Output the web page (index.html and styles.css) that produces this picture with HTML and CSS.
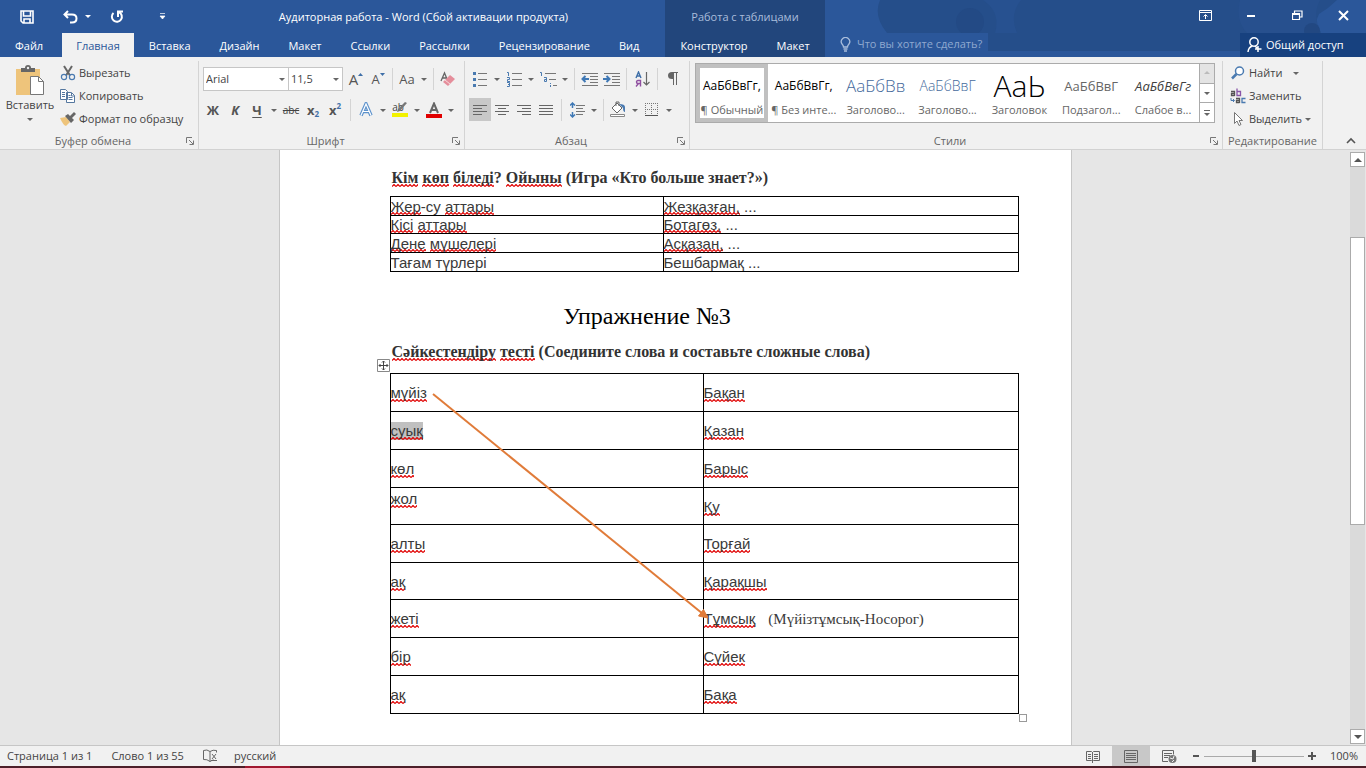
FILE: index.html
```html
<!DOCTYPE html>
<html lang="ru">
<head>
<meta charset="utf-8">
<title>Аудиторная работа - Word</title>
<link rel="stylesheet" href="styles.css">
</head>
<body>
<svg class="defs" aria-hidden="true">
  <symbol id="caret" viewBox="0 0 12 12"><path d="M3 5h6L6 8z" fill="#666"/></symbol>
  <symbol id="launch" viewBox="0 0 9 9"><path d="M.5 6V.5H6M3 3l4 4M7.500 3.500v4h-4" fill="none" stroke="#777"/></symbol>
</svg>

<header class="header">
  <svg class="clouds" viewBox="0 0 541 57" preserveAspectRatio="none" aria-hidden="true">
    <path d="M55 0H512q-8 8-18 14q-6 12 2 18q-8 6 0 19H163V33H62Q48 16 55 0z" fill="#254e8a"/>
    <path d="M158 0q18 12 12 33h22q-8-18 4-33z" fill="#275190"/>
    <circle cx="145" cy="22" r="14" fill="#234a85"/>
    <path d="M415 0h80q-8 15 1 33h-74q-12-12-7-33z" fill="#27508e"/>
    <circle cx="487" cy="31" r="8" fill="#224882"/>
  </svg>
  <div class="head-main">
    <div class="titlebar">
      <div class="quick">
        <button aria-label="Сохранить"><svg width="14" height="14" viewBox="0 0 14 14"><path d="M1 1h12v12H3l-2-2zM3.500 1v5h7V1M4 13V9h6v4" fill="none" stroke="#fff" stroke-width="1.600"/></svg></button>
        <button aria-label="Отменить" class="undo"><svg width="15" height="14" viewBox="0 0 15 14"><path d="M5 1L1.500 4.500L5 8M2 4.500h7q4.500 0 4.500 4T9 12.500H7" fill="none" stroke="#fff" stroke-width="2"/></svg></button>
        <button aria-label="Список отмен" class="slim"><svg width="6" height="4" viewBox="0 0 6 4"><path d="M0 0h6L3 3z" fill="#fff"/></svg></button>
        <button aria-label="Повторить" class="redo"><svg width="14" height="14" viewBox="0 0 14 14"><path d="M3.500 3A5 5 0 1 0 9 2.200M8 7V1.500h5" fill="none" stroke="#fff" stroke-width="2"/></svg></button>
        <button aria-label="Настройка панели" class="custom"><svg width="7" height="7" viewBox="0 0 7 7"><path d="M1 .5h5M1 3h5L3.500 6z" fill="#fff" stroke="#fff" stroke-width=".7"/></svg></button>
      </div>
      <div class="doc-title">Аудиторная работа - Word (Сбой активации продукта)</div>
    </div>
    <nav class="tabs">
      <button class="file">Файл</button><button class="active">Главная</button><button>Вставка</button><button>Дизайн</button><button>Макет</button><button>Ссылки</button><button>Рассылки</button><button>Рецензирование</button><button>Вид</button>
    </nav>
  </div>
  <div class="context">
    <div class="context-title">Работа с таблицами</div>
    <nav class="tabs"><button>Конструктор</button><button>Макет</button></nav>
  </div>
  <div class="head-right">
    <div class="window-buttons">
      <button aria-label="Параметры ленты"><svg width="13" height="11" viewBox="0 0 13 11"><path d="M.5.500h12v10H.5zM.5 2.500h12M6.500 9V5M4.500 6.500l2-2l2 2" fill="none" stroke="#fff"/></svg></button>
      <button aria-label="Свернуть"><svg width="10" height="10" viewBox="0 0 10 10"><path d="M1 6h8" stroke="#fff" stroke-width="2"/></svg></button>
      <button aria-label="Восстановить"><svg width="11" height="11" viewBox="0 0 11 11"><path d="M.5 3.500h7v6h-7zM.5 4.500h7M2.500 3V1h7.500v6H8" fill="none" stroke="#fff" stroke-width="1.200"/></svg></button>
      <button aria-label="Закрыть"><svg width="11" height="11" viewBox="0 0 11 11"><path d="M1 1l9 9M10 1l-9 9" stroke="#fff" stroke-width="2"/></svg></button>
    </div>
    <div class="right-row">
      <label class="tell"><svg width="11" height="15" viewBox="0 0 11 15"><path d="M3.500 10Q3.500 8.500 2 7A4.200 4.200 0 1 1 9 7Q7.500 8.500 7.500 10zM3.500 12h4M4 14h3" fill="none" stroke="#a9bddb" stroke-width="1.300"/></svg><input type="text" placeholder="Что вы хотите сделать?" aria-label="Что вы хотите сделать?"></label>
      <button class="share"><svg width="15" height="16" viewBox="0 0 15 16"><circle cx="7" cy="5" r="4.200" fill="none" stroke="#fff" stroke-width="1.500"/><path d="M1 15Q1.500 10 5.500 9M8 9l2 2M11 9v6M8 12h6.500" fill="none" stroke="#fff" stroke-width="1.500"/></svg>Общий доступ</button>
    </div>
  </div>
</header>

<section class="ribbon" aria-label="Главная">
  <div class="group clipboard">
    <div class="group-body">
      <button class="paste"><svg width="28" height="31" viewBox="0 0 28 31"><path d="M0 4h24v26H0z" fill="#eec47b"/><path d="M5 7V3h4q0-3 3-3t3 3h4v4z" fill="#666"/><circle cx="12" cy="3" r="1.200" fill="#eee"/><path d="M14.500 11.500h8l5 5v13h-13z" fill="#fff" stroke="#777"/><path d="M22.500 11.500v5h5" fill="none" stroke="#777"/></svg><span>Вставить</span><svg width="12" height="12"><use href="#caret"/></svg></button>
      <div class="commands">
        <button><svg width="16" height="16" viewBox="0 0 16 16"><path d="M4 1l6 9.500M12 1L6 10.500" stroke="#666" stroke-width="2"/><circle cx="4" cy="12" r="2.600" fill="none" stroke="#4a7ab0" stroke-width="1.200"/><circle cx="12" cy="12" r="2.600" fill="none" stroke="#4a7ab0" stroke-width="1.200"/></svg>Вырезать</button>
        <button><svg width="16" height="16" viewBox="0 0 16 16"><path d="M.5 1.500h5l2 2v8h-7zM6.500 4.500h5l3 3v7h-8z" fill="#fff" stroke="#55779f"/><path d="M2 4.500h3M2 6.500h3M2 8.500h3M8.500 7.500h2M8.500 9.500h4M8.500 11.500h4M11.500 5v3h3" fill="none" stroke="#55779f"/></svg>Копировать</button>
        <button><svg width="16" height="16" viewBox="0 0 16 16"><path d="M0 7l6-1l4 5l-4 4q-3-1-6-8z" fill="#eec47b"/><path d="M5 5l3-2l2 2l4-4l2 2l-4 4l2 2l-3 3z" fill="#666"/></svg>Формат по образцу</button>
      </div>
    </div>
    <footer><span>Буфер обмена</span><button aria-label="Буфер обмена: параметры"><svg width="9" height="9"><use href="#launch"/></svg></button></footer>
  </div>

  <div class="group font">
    <div class="group-body rows">
      <div class="row">
        <div class="combo name"><input type="text" value="Arial" aria-label="Шрифт"><svg width="12" height="12"><use href="#caret"/></svg></div>
        <div class="combo size"><input type="text" value="11,5" aria-label="Размер шрифта"><svg width="12" height="12"><use href="#caret"/></svg></div>
        <button class="tool after-combo" aria-label="Увеличить размер"><span class="glyph big">A</span><svg width="5" height="12" viewBox="0 0 5 12"><path d="M0 3h5L2.500 0z" fill="#3f6fa8"/></svg></button>
        <button class="tool" aria-label="Уменьшить размер"><span class="glyph">A</span><svg width="5" height="12" viewBox="0 0 5 12"><path d="M0 0h5L2.500 3z" fill="#3f6fa8"/></svg></button>
        <i class="sep"></i>
        <button class="tool glyph" aria-label="Регистр">Aa</button><button class="drop" aria-label="Регистр: меню"><svg width="12" height="12"><use href="#caret"/></svg></button>
        <i class="sep"></i>
        <button class="tool" aria-label="Очистить формат"><svg width="16" height="16" viewBox="0 0 16 16"><path d="M1 10L4.500 2L7 8M2 7h4" fill="none" stroke="#666" stroke-width="1.300"/><path d="M3 11l7-7l5 4l-7 7z" fill="#e58e9b"/><path d="M5 9l5 4" stroke="#f5dadd"/></svg></button>
      </div>
      <div class="row">
        <button class="tool glyph bold">Ж</button><button class="tool glyph bold italic">К</button><button class="tool glyph bold under">Ч</button><button class="drop" aria-label="Подчеркивание"><svg width="12" height="12"><use href="#caret"/></svg></button>
        <button class="tool strike">abc</button><button class="tool glyph bold">x<sub>2</sub></button><button class="tool glyph bold">x<sup>2</sup></button>
        <i class="sep wide"></i>
        <button class="tool" aria-label="Эффекты текста"><svg width="14" height="15" viewBox="0 0 14 15"><path d="M2 13.500L7 2l5 11.500M4 9.500h6" fill="none" stroke="#5d92cc" stroke-width="3.500"/><path d="M2 13.500L7 2l5 11.500M4 9.500h6" fill="none" stroke="#fff" stroke-width="1.200"/></svg></button><button class="drop" aria-label="Эффекты: меню"><svg width="12" height="12"><use href="#caret"/></svg></button>
        <button class="tool mark" aria-label="Цвет выделения"><span>ab</span><svg width="16" height="17" viewBox="0 0 16 17"><path d="M15 2l-7 8l-3 1l1-3l7-7z" fill="#777"/><path d="M0 12h16v4H0z" fill="#f2f200"/></svg></button><button class="drop" aria-label="Выделение: меню"><svg width="12" height="12"><use href="#caret"/></svg></button>
        <button class="tool" aria-label="Цвет текста"><svg width="16" height="16" viewBox="0 0 16 16"><path d="M4 11L8 1.500L12 11M5.500 8h5" fill="none" stroke="#666" stroke-width="2"/><path d="M0 12h16v4H0z" fill="#e00000"/></svg></button><button class="drop" aria-label="Цвет: меню"><svg width="12" height="12"><use href="#caret"/></svg></button>
      </div>
    </div>
    <footer><span>Шрифт</span><button aria-label="Шрифт: параметры"><svg width="9" height="9"><use href="#launch"/></svg></button></footer>
  </div>

  <div class="group paragraph">
    <div class="group-body rows">
      <div class="row">
        <button class="tool" aria-label="Маркеры"><svg width="14" height="16" viewBox="0 0 14 16"><path d="M5 2.500h9M5 8.500h9M5 14.500h9" stroke="#777"/><path d="M0 1h3v3H0zM0 7h3v3H0zM0 13h3v3H0z" fill="#4a7ab0"/></svg></button><button class="drop" aria-label="Маркеры: меню"><svg width="12" height="12"><use href="#caret"/></svg></button>
        <button class="tool" aria-label="Нумерация"><svg width="15" height="16" viewBox="0 0 15 16"><path d="M5 2.500h10M5 8.500h10M5 14.500h10" stroke="#777"/><path d="M0 1.500h1.500V5M0 6.500h2.500v2H.5v2H3M0 11.500h2.500v4H0M1 13.500h1.500" fill="none" stroke="#4a7ab0"/></svg></button><button class="drop" aria-label="Нумерация: меню"><svg width="12" height="12"><use href="#caret"/></svg></button>
        <button class="tool" aria-label="Многоуровневый список"><svg width="17" height="16" viewBox="0 0 17 16"><path d="M5 2.500h11M9 8.500h7M13 14.500h4" stroke="#777"/><path d="M0 1.500h1.500V5M4 6.500h2.500v4H4.500v-2h2M10.500 12v1M10.500 14v2" fill="none" stroke="#4a7ab0"/></svg></button><button class="drop" aria-label="Список: меню"><svg width="12" height="12"><use href="#caret"/></svg></button>
        <i class="sep"></i>
        <button class="tool" aria-label="Уменьшить отступ"><svg width="17" height="14" viewBox="0 0 17 14"><path d="M1 1.500h16M9 4.500h8M9 7.500h8M9 10.500h8M1 13.500h16" stroke="#777"/><path d="M8 7H2M4.500 4L1.500 7l3 3" fill="none" stroke="#3f78b5" stroke-width="2"/></svg></button>
        <button class="tool" aria-label="Увеличить отступ"><svg width="17" height="14" viewBox="0 0 17 14"><path d="M1 1.500h16M9 4.500h8M9 7.500h8M9 10.500h8M1 13.500h16" stroke="#777"/><path d="M0 7h6M3.500 4l3 3l-3 3" fill="none" stroke="#3f78b5" stroke-width="2"/></svg></button>
        <i class="sep wide"></i>
        <button class="tool sort" aria-label="Сортировка"><svg width="15" height="16" viewBox="0 0 15 16"><path d="M1 7L3.500 1L6 7M2 5h3" fill="none" stroke="#3f6fa8" stroke-width="1.400"/><path d="M5.500 15.500V9.500H3q-1.500 0-1.500 1.500T3 12.500h2.500M3.500 12.500L1 15.500" fill="none" stroke="#9050a0" stroke-width="1.400"/><path d="M11.500 1v13M8.500 11l3 3l3-3" fill="none" stroke="#666" stroke-width="1.200"/></svg></button>
        <i class="sep wide"></i>
        <button class="tool" aria-label="Знаки абзаца"><svg width="10" height="13" viewBox="0 0 10 13"><path d="M4 0h6v1H9v12H8V1H6v12H5V7H4Q0 7 0 3.500T4 0z" fill="#666"/></svg></button>
      </div>
      <div class="row">
        <button class="tool chosen" aria-label="По левому краю"><svg width="14" height="12" viewBox="0 0 14 12"><path d="M0 1.500h14M0 4.500h9M0 7.500h14M0 10.500h9" stroke="#666"/></svg></button>
        <button class="tool" aria-label="По центру"><svg width="14" height="12" viewBox="0 0 14 12"><path d="M0 1.500h14M3 4.500h8M0 7.500h14M3 10.500h8" stroke="#666"/></svg></button>
        <button class="tool" aria-label="По правому краю"><svg width="14" height="12" viewBox="0 0 14 12"><path d="M0 1.500h14M5 4.500h9M0 7.500h14M5 10.500h9" stroke="#666"/></svg></button>
        <button class="tool" aria-label="По ширине"><svg width="14" height="12" viewBox="0 0 14 12"><path d="M0 1.500h14M0 4.500h14M0 7.500h14M0 10.500h14" stroke="#666"/></svg></button>
        <i class="sep wide"></i>
        <button class="tool" aria-label="Интервал"><svg width="15" height="16" viewBox="0 0 15 16"><path d="M6 3.500h9M6 6.500h7M6 9.500h9M6 12.500h7" stroke="#777"/><path d="M2.500 1v5M2.500 10v5M0 3.500L2.500 1L5 3.500M0 12.500L2.500 15L5 12.500" fill="none" stroke="#3f78b5" stroke-width="1.500"/></svg></button><button class="drop" aria-label="Интервал: меню"><svg width="12" height="12"><use href="#caret"/></svg></button>
        <i class="sep"></i>
        <button class="tool" aria-label="Заливка"><svg width="16" height="17" viewBox="0 0 16 17"><path d="M2 7l5-5l5 5l-5 5z" fill="#fff" stroke="#666"/><path d="M6 5V1h3v4" fill="none" stroke="#666"/><path d="M9 3q6 0 6 3v5q-2 0-2-4z" fill="#4a7ab0"/><path d="M.5 13.500h14v2H.5z" fill="#fff" stroke="#888"/></svg></button><button class="drop" aria-label="Заливка: меню"><svg width="12" height="12"><use href="#caret"/></svg></button>
        <button class="tool" aria-label="Границы"><svg width="14" height="14" viewBox="0 0 14 14"><path d="M0 .5h13M0 6.500h13M.5 0v13M6.500 0v13M12.500 0v13" stroke="#777" stroke-dasharray="1 1"/><path d="M0 12.500h13" stroke="#555"/></svg></button><button class="drop" aria-label="Границы: меню"><svg width="12" height="12"><use href="#caret"/></svg></button>
      </div>
    </div>
    <footer><span>Абзац</span><button aria-label="Абзац: параметры"><svg width="9" height="9"><use href="#launch"/></svg></button></footer>
  </div>

  <div class="group styles">
    <div class="group-body">
      <div class="gallery">
        <button class="style current"><span class="sample">АаБбВвГг,</span><span class="label">¶ Обычный</span></button>
        <button class="style"><span class="sample">АаБбВвГг,</span><span class="label">¶ Без инте...</span></button>
        <button class="style"><span class="sample h1">АаБбВв</span><span class="label">Заголово...</span></button>
        <button class="style"><span class="sample h2">АаБбВвГ</span><span class="label">Заголово...</span></button>
        <button class="style"><span class="sample title">АаЬ</span><span class="label">Заголовок</span></button>
        <button class="style"><span class="sample subtitle">АаБбВвГ</span><span class="label">Подзагол...</span></button>
        <button class="style"><span class="sample weak">АаБбВвГг</span><span class="label">Слабое в...</span></button>
        <div class="gallery-scroll">
          <button class="off" aria-label="Вверх"><svg width="12" height="12" viewBox="0 0 12 12"><path d="M3 7h6L6 4z" fill="#bbb"/></svg></button>
          <button aria-label="Вниз"><svg width="12" height="12"><use href="#caret"/></svg></button>
          <button aria-label="Все стили"><svg width="12" height="12" viewBox="0 0 12 12"><path d="M3 3.500h6" stroke="#666"/><path d="M3 6h6L6 9z" fill="#666"/></svg></button>
        </div>
      </div>
    </div>
    <footer><span>Стили</span><button aria-label="Стили: параметры"><svg width="9" height="9"><use href="#launch"/></svg></button></footer>
  </div>

  <div class="group editing">
    <div class="group-body">
      <div class="commands">
        <button><svg width="16" height="16" viewBox="0 0 16 16"><circle cx="9.500" cy="6" r="4" fill="#fff" stroke="#4a7ab0" stroke-width="1.500"/><path d="M6.500 9L2 13.500" stroke="#4a7ab0" stroke-width="2.500"/></svg>Найти<svg class="find-caret" width="12" height="12"><use href="#caret"/></svg></button>
        <button><svg width="16" height="16" viewBox="0 0 16 16" fill="none" stroke-width="1.300"><path d="M1 3.500h3.500V8M4.500 5.500H1.500v2h3" stroke="#555"/><path d="M7 .5V7.500h3.500v-4H7" stroke="#8855a8"/><path d="M1 10v2.500h3M3 11l1.500 1.500L3 14" stroke="#4a7ab0" stroke-width="1"/><path d="M6 10.500h3.500V15M9.500 12.500H6.500v2h3" stroke="#555"/><path d="M15.500 10.500H12v4h3.500" stroke="#4a7ab0"/></svg>Заменить</button>
        <button><svg width="16" height="16" viewBox="0 0 16 16"><path d="M4.500 1.500v11l2.500-2.500l2 4.500l2-1l-2-4h3.500z" fill="#fff" stroke="#777"/></svg>Выделить<svg class="tight" width="12" height="12"><use href="#caret"/></svg></button>
      </div>
    </div>
    <footer><span>Редактирование</span></footer>
  </div>
  <div class="ribbon-end"><button aria-label="Свернуть ленту"><svg width="10" height="7" viewBox="0 0 10 7"><path d="M1 6l4-4l4 4" fill="none" stroke="#555" stroke-width="1.600"/></svg></button></div>
</section>

<main class="workspace">
  <div class="canvas">
    <article class="page">
      <h2><u>Кім</u> <u>көп</u> <u>біледі</u>? <u>Ойыны</u> (Игра «Кто больше знает?»)</h2>
      <table class="names">
        <tr><td><u>Жер</u>-су <u>аттары</u></td><td><u>Жезқазған,</u> ...</td></tr>
        <tr><td><u>Кісі</u> <u>аттары</u></td><td><u>Ботагөз,</u> ...</td></tr>
        <tr><td><u>Дене</u> <u>мүшелері</u></td><td><u>Асқазан,</u> ...</td></tr>
        <tr><td>Тағам түрлері</td><td>Бешбармақ ...</td></tr>
      </table>
      <h1>Упражнение №3</h1>
      <h2><u>Сәйкестендіру</u> <u>тесті</u> (Соедините слова и составьте сложные слова)</h2>
      <div class="match-wrap">
        <table class="match">
          <tr><td><u>мүйіз</u></td><td><u>Бақан</u></td></tr>
          <tr><td><u class="selected">суық</u></td><td><u>Қазан</u></td></tr>
          <tr><td><u>көл</u></td><td><u>Барыс</u></td></tr>
          <tr class="short"><td class="top"><u>жол</u></td><td><u>Қу</u></td></tr>
          <tr><td><u>алты</u></td><td><u>Торғай</u></td></tr>
          <tr class="short"><td><u>ақ</u></td><td><u>Қарақшы</u></td></tr>
          <tr><td><u>жеті</u></td><td><u>Тұмсық</u><span class="answer">(Мүйізтұмсық-Носорог)</span></td></tr>
          <tr><td><u>бір</u></td><td><u>Сүйек</u></td></tr>
          <tr><td><u>ақ</u></td><td><u>Бақа</u></td></tr>
        </table>
        <svg class="arrow" width="320" height="250" viewBox="0 0 320 250" aria-hidden="true"><path d="M43 21L313 241" stroke="#e07b39" stroke-width="2"/><path d="M318 245l-9.500-2l5-6.500z" fill="#e07b39" stroke="#e07b39"/></svg>
        <svg class="move" width="13" height="13" viewBox="0 0 13 13" aria-hidden="true"><path d="M.5.500h12v12H.5z" fill="#fff" stroke="#888"/><path d="M6.500 2v9M2 6.500h9M5 3.500l1.500-1.500L8 3.500M5 9.500L6.500 11L8 9.500M3.500 5L2 6.500L3.500 8M9.500 5L11 6.500L9.500 8" fill="none" stroke="#444"/></svg>
        <span class="resize"></span>
      </div>
    </article>
  </div>
  <div class="scrollbar">
    <button aria-label="Прокрутить вверх"><svg width="14" height="14" viewBox="0 0 14 14"><path d="M3 9h8L7 5z" fill="#555"/></svg></button>
    <div class="track"><div class="thumb"></div></div>
    <button aria-label="Прокрутить вниз"><svg width="14" height="14" viewBox="0 0 14 14"><path d="M3 5h8L7 9z" fill="#555"/></svg></button>
  </div>
</main>

<footer class="status">
  <span class="pages">Страница 1 из 1</span>
  <span class="words">Слово 1 из 55</span>
  <button class="proof" aria-label="Правописание"><svg width="15" height="14" viewBox="0 0 15 14"><path d="M7 2.500Q4 0 .5 1.500v9Q4 10 7 12.500Q9 11 11 11M7 2.500v10M7 2.500Q10 .5 13.500 1.500v2M9 5l4 5M13 5l-4 5M8 11.500h6" fill="none" stroke="#666"/></svg></button>
  <span>русский</span>
  <div class="views">
    <button aria-label="Режим чтения"><svg width="14" height="13" viewBox="0 0 14 13"><path d="M.5 1.500h5l1 1l1-1h6v9h-6l-1 1l-1-1h-5zM6.500 2v11M2 4.500h3M2 6.500h3M2 8.500h3M8 4.500h4M8 6.500h4M8 8.500h4" fill="none" stroke="#666"/></svg></button>
    <button class="chosen" aria-label="Разметка страницы"><svg width="14" height="13" viewBox="0 0 14 13"><path d="M.5.500h13v12H.5zM2 3.500h10M2 5.500h10M2 7.500h10M2 9.500h10" fill="none" stroke="#666"/></svg></button>
    <button aria-label="Веб-документ"><svg width="15" height="13" viewBox="0 0 15 13"><path d="M6 11.500H.5V.5h11v4M2 3.500h8M2 5.500h6M2 7.500h4" fill="none" stroke="#666"/><circle cx="10.500" cy="9" r="4" fill="#777"/><path d="M8 8l3 1l1-3M10 12l2-2" stroke="#eee" fill="none"/></svg></button>
  </div>
  <div class="zoom">
    <button aria-label="Уменьшить"><svg width="8" height="8" viewBox="0 0 8 8"><path d="M1 4h6" stroke="#555" stroke-width="2"/></svg></button>
    <input type="range" min="0" max="100" value="50" aria-label="Масштаб">
    <button aria-label="Увеличить"><svg width="8" height="8" viewBox="0 0 8 8"><path d="M0 4h8M4 0v8" stroke="#555" stroke-width="2"/></svg></button>
  </div>
  <span>100%</span>
</footer>
<div class="desk"></div>
</body>
</html>
```
FILE: styles.css
```css
* { box-sizing: border-box; }
body {
  margin: 0;
  height: 100vh;
  display: flex;
  flex-direction: column;
  overflow: hidden;
  background: #e6e6e6;
  color: #444;
  font: 11px/16px "Open Sans", "Noto Sans", sans-serif;
}
button {
  margin: 0;
  padding: 0;
  border: 0;
  background: none;
  color: inherit;
  font: inherit;
  white-space: nowrap;
}
button svg, label svg { display: block; flex: none; }
input { min-width: 0; border: 0; padding: 0; background: none; color: inherit; font: inherit; }
.defs { position: absolute; width: 0; height: 0; }

/* Title bar and tabs */
.header { position: relative; display: flex; height: 57px; flex: none; background: #2b579a; color: #fff; }
.clouds { position: absolute; top: 0; right: 0; width: calc(100% - 825px); height: 100%; }
.head-main { display: flex; flex-direction: column; width: 665px; flex: none; }
.titlebar { display: flex; align-items: center; height: 33px; }
.quick { display: flex; align-items: center; width: 182px; padding-left: 20px; height: 30px; }
.quick .undo { margin-left: 29px; }
.quick .slim { margin-left: 7px; }
.quick .redo { margin-left: 19px; }
.quick .custom { margin-left: 35px; }
.doc-title { flex: 1; text-align: center; }
.tabs { display: flex; gap: 1px; height: 24px; }
.tabs button { padding: 0 14px; line-height: 23px; }
.tabs .file { padding: 0 18px 0 15px; }
.tabs .active { background: #f1f1f1; color: #2b579a; }
.context { display: flex; flex-direction: column; width: 160px; flex: none; background: #22467c; }
.context-title { height: 33px; line-height: 33px; text-align: center; color: #a9bddb; }
.context .tabs { justify-content: center; }
.head-right { position: relative; display: flex; flex-direction: column; flex: 1; }
.window-buttons { display: flex; justify-content: flex-end; height: 33px; }
.window-buttons button { width: 46px; height: 30px; display: grid; place-items: center; }
.right-row { display: flex; justify-content: space-between; height: 24px; }
.tell { display: flex; align-items: center; gap: 6px; width: 148px; margin-left: 14px; background: #2b579a; height: 22px; padding-left: 1px; }
.tell input { flex: 1; }
.tell input::placeholder { color: #8fa9d0; opacity: 1; }
.share { display: flex; align-items: center; gap: 4px; width: 126px; padding-left: 7px; background: #17417f; }

/* Ribbon */
.ribbon { display: flex; height: 93px; flex: none; padding-top: 4px; background: #f1f1f1; border-bottom: 1px solid #d2d2d2; }
.group { display: flex; flex-direction: column; flex: none; border-right: 1px solid #d4d4d4; }
.group-body { display: flex; flex: 1; }
.group footer { display: flex; align-items: center; height: 16px; color: #666; }
.group footer span { flex: 1; text-align: center; }
.group footer button { padding-right: 3px; }
.clipboard { width: 199px; }
.font { width: 266px; }
.paragraph { width: 225px; }
.styles { flex: 1; min-width: 0; }
.editing { width: 100px; }
.paste { width: 60px; display: flex; flex-direction: column; align-items: center; padding-top: 4px; }
.paste span { padding-top: 1px; }
.commands { display: flex; flex-direction: column; }
.commands button { display: flex; align-items: center; gap: 3px; height: 23px; }
.editing .commands { padding-left: 7px; }
.find-caret { margin-left: 5px; }
.commands .tight { margin-left: -3px; }
.rows { flex-direction: column; gap: 8px; padding: 6px 0 0 3px; }
.paragraph .rows { padding-left: 4px; }
.row { display: flex; align-items: center; height: 23px; }
.combo { display: flex; align-items: center; height: 24px; border: 1px solid #c6c6c6; background: #fff; }
.combo input { flex: 1; padding-left: 2px; }
.combo.name { width: 86px; margin-left: 1px; }
.combo.size { width: 54px; border-left: 0; }
.combo svg { flex: none; }
.after-combo { margin-left: 2px; }
.tool { display: flex; align-items: center; justify-content: center; width: 22px; height: 23px; flex: none; }
.drop { width: 12px; flex: none; }
.sep { width: 7px; height: 22px; flex: none; background: linear-gradient(#d4d4d4, #d4d4d4) center / 1px 100% no-repeat; }
.sep.wide { width: 9px; }
.glyph { font-size: 13px; color: #555; }
.glyph.big { font-size: 15px; }
.bold { font-weight: 700; }
.italic { font-style: italic; }
.under { text-decoration: underline; text-underline-offset: 2px; }
.strike { font-size: 10px; text-decoration: line-through; }
.tool sub, .tool sup { font-size: 8px; line-height: 8px; color: #3f6fa8; }
.tool sub { align-self: flex-end; padding-bottom: 3px; }
.tool sup { align-self: flex-start; padding-top: 4px; }
.chosen { background: #c8c8c8; }
.mark { display: grid; place-items: center; font-size: 10px; }
.mark span, .mark svg { grid-area: 1 / 1; }
.mark span { padding: 0 4px 6px 0; }

/* Style gallery */
.styles .group-body { padding: 2px 7px 0 5px; }
.gallery { display: flex; flex: 1; min-width: 0; height: 60px; border: 1px solid #ababab; background: #fff; }
.style { display: flex; flex-direction: column; flex: 1; min-width: 0; padding: 10px 2px 0; }
.style.current { box-shadow: inset 0 0 0 4px #c0c0c0; }
.sample { display: flex; align-items: center; justify-content: center; width: 100%; height: 24px; color: #000; font-size: 12px; }
.label { width: 100%; color: #666; text-align: center; line-height: 24px; }
.h1, .h2 { color: #44699c; font-weight: 300; }
.h1 { font-size: 17px; }
.h2 { font-size: 14px; }
.title { font-size: 30px; font-weight: 300; }
.subtitle { color: #666; font-size: 13px; }
.weak { color: #404040; font-size: 13px; font-style: italic; }
.gallery-scroll { display: flex; flex-direction: column; width: 15px; flex: none; border-left: 1px solid #ababab; }
.gallery-scroll button { flex: 1; display: grid; place-items: center; border-bottom: 1px solid #ababab; }
.gallery-scroll button:last-child { border-bottom: 0; }
.gallery-scroll .off { background: #e4e4e4; }
.ribbon-end { display: flex; flex: none; width: 43px; align-items: flex-end; justify-content: flex-end; padding: 0 10px 5px 0; }

/* Document */
.workspace { display: flex; flex: 1; min-height: 0; }
.canvas { flex: 1; overflow: hidden; }
.page {
  width: 58%;
  min-width: 793px;
  min-height: 100%;
  margin: 0 auto;
  padding: 18px 52px 0 110px;
  border: solid #c6c6c6;
  border-width: 0 1px;
  background: #fff;
}
.page h1 { margin: 30px 0 12px; padding-right: 114px; color: #000; text-align: center; font: 24px/28px "Liberation Serif", serif; }
.page h2 { margin: 0; padding-left: 2px; font: bold 16px/20px "Liberation Serif", serif; color: #333; white-space: nowrap; }
.page table { width: 629px; border-collapse: collapse; table-layout: fixed; color: #3a3a3a; font: 15px/17px "Liberation Sans", sans-serif; }
.page td { padding: 0; border: 1px solid #000; }
.page u {
  padding-bottom: 1px;
  text-decoration: none;
  background: url("data:image/svg+xml,%3Csvg xmlns='http://www.w3.org/2000/svg' width='4' height='3'%3E%3Cpath d='M0 2.500L2 .5L4 2.500' fill='none' stroke='%23e00000' stroke-width='1.200'/%3E%3C/svg%3E") left bottom repeat-x;
}
.page u.selected { background-color: #c0c0c0; }
.page .names u { padding-bottom: 0; }
.names { margin-top: 8px; }
.names tr { height: 19px; }
.names tr:nth-child(2) { height: 18px; }
.names td:first-child { width: 273px; }
.match td:first-child { width: 313px; }
.match tr { height: 38px; }
.match .short { height: 37px; }
.match .top { vertical-align: top; padding-top: 2px; }
.answer { padding-left: 13px; font-family: "Liberation Serif", serif; }
.match-wrap { position: relative; width: 629px; margin-top: 11px; }
.arrow { position: absolute; left: 0; top: 0; }
.move { position: absolute; left: -13px; top: -14px; }
.resize { position: absolute; right: -8px; bottom: -8px; width: 8px; height: 8px; border: 1px solid #999; background: #fff; }
.scrollbar { display: flex; flex-direction: column; width: 16px; flex: none; padding: 2px 1px 1px 0; background: #e6e6e6; }
.scrollbar button { height: 15px; border: 1px solid #ababab; background: #fff; display: grid; place-items: center; }
.track { flex: 1; background: #dadada; padding-top: 70px; }
.thumb { height: 288px; border: 1px solid #ababab; background: #fff; }

/* Status bar */
.status { display: flex; align-items: center; height: 21px; flex: none; padding: 0 8px 0 7px; border-top: 1px solid #c6c6c6; background: #f1f1f1; }
.words { margin-left: 19px; }
.proof { margin: 0 16px 0 19px; }
.views { display: flex; margin-left: auto; height: 20px; }
.views button { width: 38px; display: grid; place-items: center; }
.zoom { display: flex; align-items: center; gap: 4px; margin: 0 14px 0 4px; }
.zoom input { width: 100px; height: 14px; margin: 0; appearance: none; background: linear-gradient(#aaa, #aaa) center / 100% 1px no-repeat; }
.zoom input::-webkit-slider-thumb { appearance: none; width: 4px; height: 12px; background: #555; }
.desk { height: 2px; flex: none; background: linear-gradient(90deg, #4d1f29 245px, #a01830 245px 290px, #4d1f29 290px); }
```
